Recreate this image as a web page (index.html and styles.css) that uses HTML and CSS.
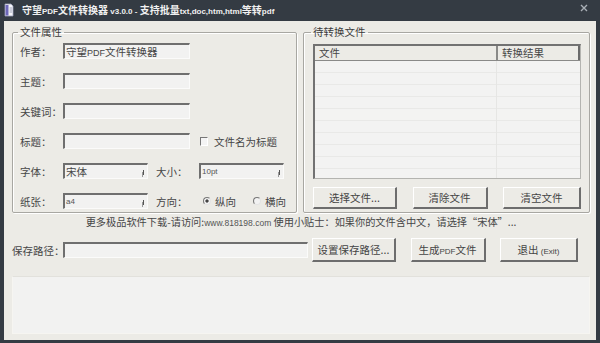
FILE: index.html
```html
<!DOCTYPE html>
<html lang="zh-CN">
<head>
    <meta charset="UTF-8">
    <meta name="viewport" content="width=device-width, initial-scale=1.0">
    <title>守望PDF文件转换器</title>
    <link rel="stylesheet" href="styles.css">
</head>
<body>
    <div class="window">
        <div class="titlebar">
            <svg class="app-icon" width="10" height="14" viewBox="0 0 10 14">
                <path d="M1 1h6l2 2v10H1z" fill="#f4f4f8" stroke="#9aa0b8" stroke-width="0.8"/>
                <path d="M1.5 2h3v10.5h-3z" fill="#6c66b8"/>
                <path d="M5.5 5h2.5M5.5 7h2.5M5.5 9h2.5" stroke="#8c90a8" stroke-width="0.8"/>
            </svg>
            <span class="title">守望<span class="en">PDF</span>文件转换器 <span class="en">v3.0.0 - </span>支持批量<span class="en">txt,doc,htm,html</span>等转<span class="en">pdf</span></span>
            <svg class="close" width="8" height="8" viewBox="0 0 8 8">
                <path d="M1 1l6 6M7 1l-6 6" stroke="#a9afb6" stroke-width="1.4"/>
            </svg>
        </div>

        <div class="client">
            <div class="groups">
                <fieldset class="group props">
                    <legend>文件属性</legend>
                    <div class="row">
                        <label>作者：</label>
                        <div class="field wide">守望<span class="en">PDF</span>文件转换器</div>
                    </div>
                    <div class="row">
                        <label>主题：</label>
                        <div class="field wide"></div>
                    </div>
                    <div class="row">
                        <label>关键词：</label>
                        <div class="field wide"></div>
                    </div>
                    <div class="row">
                        <label>标题：</label>
                        <div class="field wide"></div>
                        <span class="checkbox"></span>
                        <span class="opt">文件名为标题</span>
                    </div>
                    <div class="row">
                        <label>字体：</label>
                        <div class="field combo">宋体<i class="arrow"></i></div>
                        <label class="sub">大小：</label>
                        <div class="field combo"><span class="en">10pt</span><i class="arrow"></i></div>
                    </div>
                    <div class="row">
                        <label>纸张：</label>
                        <div class="field combo"><span class="en">a4</span><i class="arrow"></i></div>
                        <label class="sub">方向：</label>
                        <span class="radio checked"></span>
                        <span class="opt">纵向</span>
                        <span class="radio"></span>
                        <span class="opt">横向</span>
                    </div>
                </fieldset>

                <fieldset class="group queue">
                    <legend>待转换文件</legend>
                    <div class="list">
                        <div class="list-head">
                            <div class="col-file">文件</div>
                            <div class="col-result">转换结果</div>
                        </div>
                        <div class="list-body"></div>
                    </div>
                    <div class="btn-row">
                        <button class="btn w84">选择文件...</button>
                        <button class="btn w75">清除文件</button>
                        <button class="btn w78">清空文件</button>
                    </div>
                </fieldset>
            </div>

            <p class="tip">更多极品软件下载-请访问:<span class="en">www.818198.com</span> 使用小贴士：如果你的文件含中文，请选择“宋体”...</p>

            <div class="save-row">
                <label>保存路径：</label>
                <div class="field path"></div>
                <div class="btn-row">
                    <button class="btn w84">设置保存路径...</button>
                    <button class="btn w75">生成<span class="en">PDF</span>文件</button>
                    <button class="btn w78">退出 <span class="en">(Exit)</span></button>
                </div>
            </div>

            <div class="log"></div>
        </div>
    </div>
</body>
</html>
```

FILE: styles.css
```css
body {
    margin: 0;
    font-family: "Noto Sans CJK SC", "Noto Sans", sans-serif;
    font-size: 10.5px;
    color: #464646;
}
.en {
    font-family: "Liberation Sans", Arial, sans-serif;
    font-size: 9px;
}
.window {
    width: 600px;
    height: 343px;
    background-color: #343b43;
    padding: 0 4px 3px;
    box-sizing: border-box;
    display: flex;
    flex-direction: column;
}
.titlebar {
    height: 21px;
    display: flex;
    align-items: center;
    flex-shrink: 0;
}
.app-icon {
    margin: 0 8px 2px 0;
}
.title {
    color: #f0f0f0;
    font-size: 10px;
    font-weight: bold;
    margin-top: -2px;
}
.title .en {
    font-size: 8px;
}
.close {
    margin: 0 8px 6px auto;
}
.client {
    flex: 1;
    background-color: #ecebe6;
    padding: 5px 6px 6px 8px;
    display: flex;
    flex-direction: column;
}
.groups {
    display: flex;
    gap: 6px;
}
.group {
    flex: 1;
    margin: 0;
    min-width: 0;
    border: 1px solid #a8a7a2;
    border-radius: 2px;
    box-shadow: inset 1px 1px 0 #fff, 1px 1px 0 #fff;
    padding: 5px 8px 3px 7px;
}
.group legend {
    padding: 0 2px;
    margin-left: -2px;
    line-height: 12px;
    color: #3c3c3c;
}
.queue {
    padding: 6px 8px 3px 9px;
}
.row {
    display: flex;
    align-items: center;
    height: 16px;
    margin-bottom: 14px;
}
.row:last-child {
    margin-bottom: 0;
}
label {
    width: 43px;
    flex-shrink: 0;
    white-space: nowrap;
}
label.sub {
    margin-left: 8px;
}
.field {
    height: 16px;
    box-sizing: border-box;
    background-color: #f2f2f1;
    border-top: 2px solid #6f6f6f;
    border-left: 2px solid #6f6f6f;
    border-right: 1px solid #fbfbfa;
    border-bottom: 1px solid #fbfbfa;
    line-height: 13px;
    padding-left: 1px;
    white-space: nowrap;
}
.field.wide {
    width: 127px;
}
.field.combo {
    width: 85px;
    display: flex;
    align-items: center;
}
.field.combo .en {
    font-size: 8px;
    color: #555;
}
.arrow {
    width: 1px;
    height: 5px;
    margin: 1px 3px 0 auto;
    background-color: #555;
    box-shadow: -1px 2px 0 #999;
}
.checkbox {
    width: 8px;
    height: 9px;
    box-sizing: border-box;
    border-top: 1px solid #777;
    border-left: 1px solid #777;
    border-right: 1px solid #fff;
    border-bottom: 1px solid #fff;
    background-color: #f4f4f4;
    margin: 0 6px 0 10px;
}
.radio {
    width: 8px;
    height: 8px;
    box-sizing: border-box;
    border-radius: 50%;
    border: 1px solid;
    border-color: #777 #e4e4e4 #e4e4e4 #777;
    background-color: #f2f2f2;
    margin: 0 4px 0 4px;
}
.radio.checked {
    background: radial-gradient(circle, #444 1.4px, #f2f2f2 1.8px);
}
.radio + .opt + .radio {
    margin-left: 17px;
}
.opt {
    white-space: nowrap;
}
.list {
    height: 135px;
    box-sizing: border-box;
    border-top: 2px solid #727272;
    border-left: 2px solid #727272;
    border-right: 1px solid #b4b4b0;
    border-bottom: 1px solid #b4b4b0;
    display: flex;
    flex-direction: column;
}
.list-head {
    display: flex;
    height: 14px;
    line-height: 13px;
    background-color: #ecebe6;
    border-bottom: 1px solid #8a8a88;
    flex-shrink: 0;
}
.col-file {
    width: 177px;
    padding-left: 4px;
    border-right: 2px solid #8a8a88;
}
.col-result {
    flex: 1;
    padding-left: 4px;
    border-right: 2px solid #6a6a6a;
}
.list-body {
    flex: 1;
    background:
        linear-gradient(to right, transparent 181px, #e6e6e4 181px, #e6e6e4 182px, transparent 182px),
        repeating-linear-gradient(to bottom, #f3f3f2 0, #f3f3f2 11px, #e9e9e7 11px, #e9e9e7 12px);
}
.btn-row {
    display: flex;
    justify-content: space-between;
    margin-top: 8px;
}
.btn {
    height: 22px;
    box-sizing: border-box;
    background-color: #ecebe6;
    border-top: 1px solid #fff;
    border-left: 1px solid #fff;
    border-right: 2px solid #6d6d6d;
    border-bottom: 2px solid #6d6d6d;
    border-radius: 0;
    padding: 0;
    font-family: inherit;
    font-size: 10.5px;
    color: #444;
}
.btn .en {
    font-size: 8px;
}
.w84 { width: 84px; }
.w75 { width: 75px; }
.w78 { width: 78px; }
.tip {
    margin: 2px 0 0;
    height: 14px;
    line-height: 14px;
    font-size: 10.2px;
    text-align: center;
    white-space: nowrap;
}
.tip .en {
    font-size: 8.5px;
    color: #555;
}
.save-row {
    display: flex;
    align-items: center;
    height: 24px;
    margin-top: 9px;
}
.save-row label {
    width: 51px;
}
.field.path {
    width: 245px;
    margin-right: 4px;
}
.save-row .btn-row {
    width: 266px;
    margin-top: 0;
}
.save-row .btn {
    height: 24px;
}
.log {
    margin-top: 14px;
    flex: 1;
    background-color: #f2f2f1;
    border: 1px solid #f6f5f1;
    border-top-color: #e2e1dc;
}
```
